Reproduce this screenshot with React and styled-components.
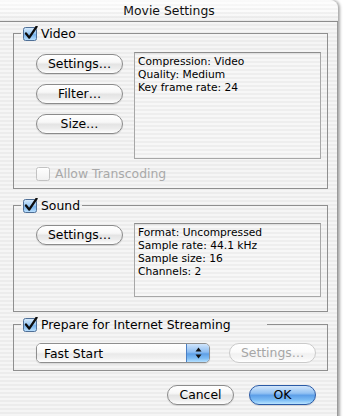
import React from "react";
import styled, { createGlobalStyle, css } from "styled-components";

const GlobalStyle = createGlobalStyle`
  html, body {
    margin: 0;
    padding: 0;
    background: #ffffff;
    overflow: hidden;
  }
  body {
    font-family: "DejaVu Sans", "Liberation Sans", sans-serif;
    font-size: 12.4px;
    color: #000;
  }
`;

const pinstripe = css`
  background: repeating-linear-gradient(
    to bottom,
    #ececec 0px,
    #ececec 2px,
    #f5f5f5 2px,
    #f5f5f5 4px
  );
`;

const Window = styled.div`
  ${pinstripe};
  width: 338px;
  height: 430px;
  border-top-right-radius: 8px;
  box-shadow: 2px 0 3px rgba(0, 0, 0, 0.35), inset -1px 0 0 #9a9a9a;
  display: flex;
  flex-direction: column;
  overflow: hidden;
`;

const TitleBar = styled.div`
  height: 21px;
  flex: none;
  border-bottom: 1px solid #8c8c8c;
  display: flex;
  align-items: center;
  justify-content: center;
  font-size: 12.4px;
  background:
    linear-gradient(to bottom, rgba(255, 255, 255, 0.7), rgba(255, 255, 255, 0.1) 60%, rgba(0, 0, 0, 0.03)),
    repeating-linear-gradient(to bottom, #efefef 0, #efefef 2px, #fafafa 2px, #fafafa 4px);
  color: #111;
`;

const Body = styled.div`
  display: flex;
  flex-direction: column;
  padding: 0 10px 0 13px;
`;

const Group = styled.fieldset`
  margin: ${(p) => p.$mt}px 0 0 0;
  min-width: 0;
  border: 1px solid #8f8f8f;
  padding: 0;
`;

const GroupBody = styled.div`
  padding: ${(p) => p.$pt}px 6px ${(p) => p.$pb}px 22px;
`;

const Legend = styled.legend`
  margin-left: 7px;
  padding: 0 ${(p) => p.$pr || 2}px 0 2px;
  height: 15px;
  display: flex;
  align-items: center;
  font-size: 12.4px;
  line-height: 15px;
`;

const LabelText = styled.span`
  margin-left: ${(p) => p.$gap || 3}px;
  color: ${(p) => (p.$disabled ? "#a9a9a9" : "#000")};
  white-space: nowrap;
`;

const Row = styled.div`
  display: flex;
  align-items: flex-start;
  justify-content: space-between;
`;

const ButtonColumn = styled.div`
  display: flex;
  flex-direction: column;
  gap: 10px;
  margin-top: 2px;
`;

const AquaButton = styled.div`
  width: ${(p) => p.$w}px;
  height: 20px;
  box-sizing: border-box;
  border-radius: 10px;
  display: flex;
  align-items: center;
  justify-content: center;
  font-size: 12.4px;
  line-height: 1;
  border: 1px solid #8b8b8b;
  color: #000;
  background: linear-gradient(
    to bottom,
    #ffffff 0%,
    #f7f7f7 40%,
    #e4e4e4 52%,
    #ececec 75%,
    #ffffff 100%
  );
  box-shadow: 0 1px 1px rgba(0, 0, 0, 0.12);
  ${(p) =>
    p.$variant === "primary" &&
    css`
      border-color: #2a5aa6;
      background: linear-gradient(
        to bottom,
        #d2e6fb 0%,
        #93c2f3 40%,
        #5d9fe8 52%,
        #7bbcf5 78%,
        #b9e4ff 100%
      );
    `}
  ${(p) =>
    p.$variant === "disabled" &&
    css`
      border-color: #cacaca;
      color: #a6a6a6;
      box-shadow: none;
      background: linear-gradient(
        to bottom,
        #ffffff 0%,
        #fbfbfb 45%,
        #f1f1f1 55%,
        #f6f6f6 80%,
        #ffffff 100%
      );
    `}
`;

const InfoBox = styled.div`
  width: 187px;
  height: ${(p) => p.$h}px;
  box-sizing: border-box;
  border: 1px solid #a7a7a7;
  border-top-color: #8d8d8d;
  padding: 2px 3px;
  font-size: 10.7px;
  line-height: 13px;
  background: repeating-linear-gradient(
    to bottom,
    #eeeeee 0px,
    #eeeeee 2px,
    #f7f7f7 2px,
    #f7f7f7 4px
  );
  box-shadow: inset 0 1px 0 #e0e0e0;
`;

const CheckRow = styled.div`
  display: flex;
  align-items: center;
  height: 15px;
  margin-top: ${(p) => p.$mt}px;
`;

const Popup = styled.div`
  width: 174px;
  height: 20px;
  box-sizing: border-box;
  border: 1px solid #8e8e8e;
  border-radius: 5px;
  display: flex;
  overflow: hidden;
  box-shadow: 0 1px 1px rgba(0, 0, 0, 0.12);
`;

const PopupLabel = styled.div`
  flex: 1;
  display: flex;
  align-items: center;
  padding-left: 7px;
  background: linear-gradient(
    to bottom,
    #ffffff 0%,
    #f8f8f8 45%,
    #e9e9e9 55%,
    #f1f1f1 80%,
    #ffffff 100%
  );
`;

const PopupArrows = styled.div`
  width: 22px;
  border-left: 1px solid #4a7fc4;
  display: flex;
  align-items: center;
  justify-content: center;
  background: linear-gradient(
    to bottom,
    #cfe4fb 0%,
    #8dbdf1 45%,
    #5e9fe6 55%,
    #7fbdf4 80%,
    #b5e0ff 100%
  );
`;

const ControlRow = styled.div`
  display: flex;
  align-items: center;
  gap: 19px;
`;

const Footer = styled.div`
  display: flex;
  justify-content: flex-end;
  gap: 15px;
  margin-top: 14px;
  padding-right: 12px;
`;

function CheckBox({ checked = true, disabled = false }) {
  const id = disabled ? "cbDis" : "cbOn";
  return (
    <svg width="15" height="15" viewBox="0 0 15 15" style={{ flex: "none" }}>
      <defs>
        <linearGradient id={id} x1="0" y1="0" x2="0" y2="1">
          {disabled ? (
            <>
              <stop offset="0" stopColor="#ffffff" />
              <stop offset="1" stopColor="#f0f0f0" />
            </>
          ) : (
            <>
              <stop offset="0" stopColor="#d9ecfd" />
              <stop offset="0.45" stopColor="#9ccaf4" />
              <stop offset="0.55" stopColor="#78b3ec" />
              <stop offset="1" stopColor="#bfe3ff" />
            </>
          )}
        </linearGradient>
      </defs>
      <rect
        x="0.5"
        y="1.5"
        width="13"
        height="13"
        rx="2"
        fill={`url(#${id})`}
        stroke={disabled ? "#c2c2c2" : "#4f6f96"}
      />
      {checked && (
        <path
          d="M3 7.5 L6.2 11.6 L13.6 0.6"
          fill="none"
          stroke="#0d0d0d"
          strokeWidth="2.3"
          strokeLinecap="round"
          strokeLinejoin="round"
        />
      )}
    </svg>
  );
}

function UpDownArrows() {
  return (
    <svg width="7" height="12" viewBox="0 0 7 12">
      <path d="M3.5 0.5 L6.5 4.5 L0.5 4.5 Z" fill="#111" />
      <path d="M3.5 11.5 L6.5 7.5 L0.5 7.5 Z" fill="#111" />
    </svg>
  );
}

export default function App() {
  return (
    <>
      <GlobalStyle />
      <Window>
        <TitleBar>Movie Settings</TitleBar>
        <Body>
          <Group $mt={4}>
            <Legend>
              <CheckBox />
              <LabelText>Video</LabelText>
            </Legend>
            <GroupBody $pt={11} $pb={7}>
              <Row>
                <ButtonColumn>
                  <AquaButton $w={87}>Settings…</AquaButton>
                  <AquaButton $w={87}>Filter…</AquaButton>
                  <AquaButton $w={87}>Size…</AquaButton>
                </ButtonColumn>
                <InfoBox $h={107}>
                  <div>Compression: Video</div>
                  <div>Quality: Medium</div>
                  <div>Key frame rate: 24</div>
                </InfoBox>
              </Row>
              <CheckRow $mt={7}>
                <CheckBox checked={false} disabled />
                <LabelText $disabled $gap={4}>
                  Allow Transcoding
                </LabelText>
              </CheckRow>
            </GroupBody>
          </Group>

          <Group $mt={9}>
            <Legend>
              <CheckBox />
              <LabelText>Sound</LabelText>
            </Legend>
            <GroupBody $pt={10} $pb={14}>
              <Row>
                <ButtonColumn>
                  <AquaButton $w={87}>Settings…</AquaButton>
                </ButtonColumn>
                <InfoBox $h={74}>
                  <div>Format: Uncompressed</div>
                  <div>Sample rate: 44.1 kHz</div>
                  <div>Sample size: 16</div>
                  <div>Channels: 2</div>
                </InfoBox>
              </Row>
            </GroupBody>
          </Group>

          <Group $mt={5}>
            <Legend $pr={36}>
              <CheckBox />
              <LabelText>Prepare for Internet Streaming</LabelText>
            </Legend>
            <GroupBody $pt={11} $pb={7}>
              <ControlRow>
                <Popup>
                  <PopupLabel>Fast Start</PopupLabel>
                  <PopupArrows>
                    <UpDownArrows />
                  </PopupArrows>
                </Popup>
                <AquaButton $w={87} $variant="disabled">
                  Settings…
                </AquaButton>
              </ControlRow>
            </GroupBody>
          </Group>

          <Footer>
            <AquaButton $w={67}>Cancel</AquaButton>
            <AquaButton $w={67} $variant="primary">
              OK
            </AquaButton>
          </Footer>
        </Body>
      </Window>
    </>
  );
}
